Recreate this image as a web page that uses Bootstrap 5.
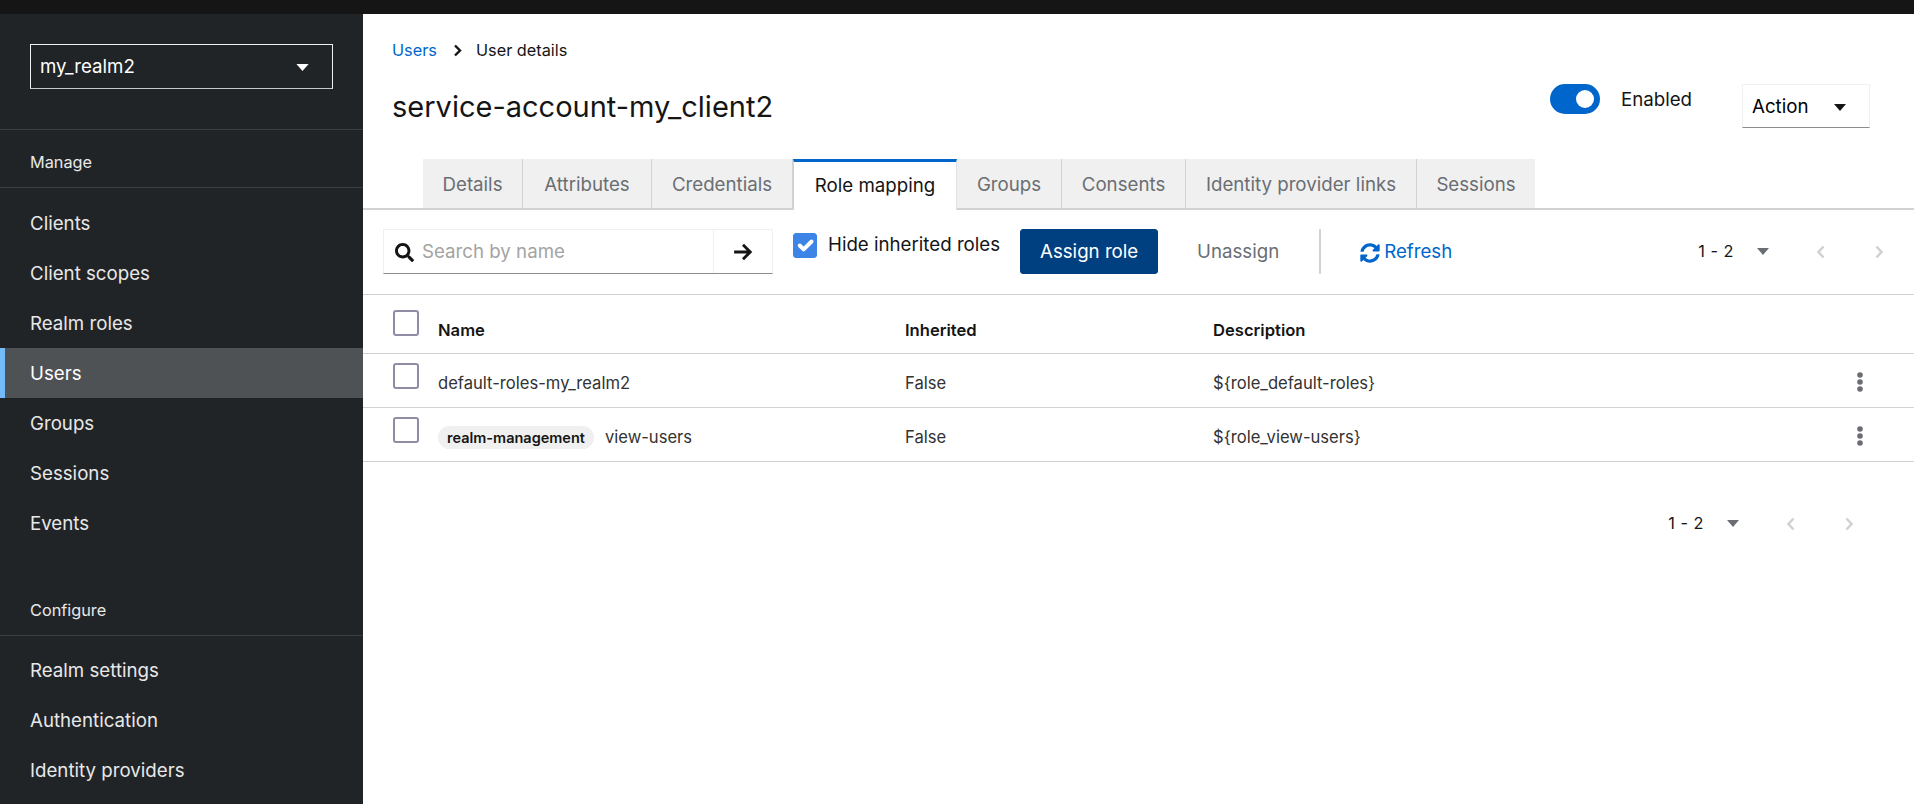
<!DOCTYPE html>
<html lang="en">
<head>
    <meta charset="UTF-8">
    <meta name="viewport" content="width=device-width, initial-scale=1">
    <title>User details</title>
    <link href="https://cdn.jsdelivr.net/npm/bootstrap@5.3.0/dist/css/bootstrap.min.css" rel="stylesheet">
    <script src="https://cdn.jsdelivr.net/npm/bootstrap@5.3.0/dist/js/bootstrap.bundle.min.js" defer></script>
    <style>
        html, body { height: 100%; overflow: hidden; }
        body { font-family: Inter, "Liberation Sans", sans-serif; font-size: 18.7px; color: #151515; }
        .top-strip { height: 14px; background: #151515; }
        .app-body { height: 790px; }

        .side { width: 363px; flex-shrink: 0; background: #212427; color: #e8e8e8; }
        .realm-wrap { padding: 30px 30px 40px; border-bottom: 1px solid #3c3f42; }
        .realm-select { height: 45px; padding: 2px 9px 0; border: 1px solid #f0f0f0; border-bottom-color: #c7c7c7; color: #fff; }
        .side-head { height: 58px; padding: 7px 30px 0; display: flex; align-items: center; font-size: 16.3px; border-bottom: 1px solid #3c3f42; }
        .side-list { padding-top: 10px; }
        .side-list + .side-gap + .side-head + .side-list { padding-top: 9px; }
        .side-list .nav-link { height: 50px; padding: 2px 30px 0; display: flex; align-items: center; color: #e8e8e8; }
        .side-list .nav-link.current { background: #4f5255; box-shadow: inset 5px 0 0 #73bcf7; color: #fff; }
        .side-gap { height: 30px; }
        .caret-gap { margin-right: 14px; }

        .crumbs { padding: 24px 25px 0 29px; }
        .crumbs .breadcrumb { --bs-breadcrumb-margin-bottom: 0; font-size: 16.3px; line-height: 24px; align-items: center; }
        .crumbs a { color: #06c; text-decoration: none; }
        .crumbs svg { margin: 0 14px 0 16px; }
        .head-row { height: 97px; padding: 22px 44px 0 29px; }
        .page-title { font-size: 29px; font-weight: 400; margin: 6px 0 0; color: #151515; }
        .switch-track { width: 50px; height: 30px; border-radius: 15px; background: #06c; position: relative; }
        .switch-track::after { content: ""; position: absolute; right: 6px; top: 6px; width: 18px; height: 18px; border-radius: 50%; background: #fff; }
        .switch-text { margin: 1px 50px 0 21px; line-height: 30px; }
        .action-btn { width: 128px; height: 44px; padding: 2px 9px 0; border: 1px solid #f0f0f0; border-bottom-color: #8a8d90; background: #fff; }

        .tab-row { padding-left: 60px; border-bottom: 2px solid #d2d2d2; height: 51px; flex-wrap: nowrap; --bs-nav-tabs-border-width: 0; }
        .tab-row .nav-link { height: 49px; padding: 0; width: 100%; text-align: center; line-height: 51px; border-radius: 0; border: 0; border-right: 1px solid #d2d2d2; background: #f0f0f0; color: #6a6e73; margin: 0; }
        .tab-row .nav-link.active { height: 51px; background: #fff; color: #151515; border-top: 3px solid #06c; border-left: 1px solid #d2d2d2; line-height: 48px; }
        .tab-a { width: 100px; } .tab-b { width: 129px; } .tab-c { width: 141px; } .tab-d { width: 164px; }
        .tab-e { width: 105px; } .tab-f { width: 124px; } .tab-g { width: 231px; } .tab-h { width: 118px; }
        .tab-h .nav-link { border-right: 0; }

        .tool-row { height: 85px; padding: 19px 0 0 20px; border-bottom: 1px solid #d2d2d2; }
        .search-box { width: 390px; height: 45px; border: 1px solid #f0f0f0; border-bottom-color: #8a8d90; }
        .search-input { flex: 1; min-width: 0; padding: 2px 11px 0; border-right: 1px solid #f0f0f0; color: #a3a3a3; }
        .search-go { width: 58px; }
        .hide-check { margin: 3px 0 0 20px; }
        .hide-check .form-check-input { width: 24px; height: 25px; margin: 0 11px 0 0; background-color: #3c85e6; border-color: #3c85e6; border-radius: 3px; background-size: 120%; }
        .hide-check label { margin-top: -1px; }
        .btn-assign { width: 138px; height: 45px; margin-left: 20px; padding: 2px 0 0; font-size: 18.7px; --bs-btn-bg: #004080; --bs-btn-border-color: #004080; --bs-btn-border-radius: 3px; }
        .btn-unassign { width: 118px; height: 45px; margin-left: 21px; padding: 2px 0 0; font-size: 18.7px; color: #6a6e73; border: 0; }
        .tool-sep { width: 2px; height: 45px; background: #d2d2d2; margin: 0 39px 0 22px; }
        .refresh { height: 45px; padding-top: 2px; color: #06c; text-decoration: none; }
        .pager { font-size: 16.3px; color: #151515; }
        .pager-count { letter-spacing: .5px; }
        .pager-top { margin-left: auto; padding: 0 30px 0 0; height: 45px; }
        .pager-bottom { height: 48px; padding-right: 60px; margin-top: 38px; }
        .pager .gap-a { margin: 0 0 0 23px; }
        .pager .gap-b { margin: 0 0 0 47px; }
        .pager .gap-c { margin: 0 0 0 50px; }

        .role-table { font-size: 16.6px; margin: 0; --bs-table-border-color: #d2d2d2; table-layout: fixed; width: 100%; }
        .role-table th, .role-table td { padding: 0; vertical-align: middle; color: #151515; }
        .role-table th { font-weight: 600; height: 58px; padding-top: 13px; }
        .role-table td { height: 54px; padding-top: 6px; color: #333; }
        .cell-check { width: 75px; padding-left: 30px !important; }
        .cell-name { width: 467px; padding-left: 0 !important; }
        .cell-inherit { width: 308px; }
        .cell-desc { width: auto; }
        .cell-kebab { width: 59px; }
        .box-check { display: block; width: 26px; height: 26px; margin: -14px 0 0 0; border: 2px solid #8f8da3; border-radius: 3px; }
        th .box-check { margin-top: -15px; }
        .client-pill { font-size: 14.5px; font-weight: 600; background: #f0f0f0; color: #151515; padding: 3px 9px; border-radius: 14px; margin-right: 11px; }
        .kebab { display: block; margin: -3px 0 0 2px; }
    </style>
</head>
<body>
    <div class="top-strip"></div>
    <div class="app-body d-flex">
        <aside class="side">
            <div class="realm-wrap">
                <div class="realm-select d-flex align-items-center justify-content-between">
                    <span>my_realm2</span>
                    <svg class="caret-gap" width="13" height="7" viewBox="0 0 14 8"><path d="M0 0h14L7 8z" fill="#fff"/></svg>
                </div>
            </div>
            <div class="side-head">Manage</div>
            <nav class="nav flex-column side-list">
                <a class="nav-link" href="#">Clients</a>
                <a class="nav-link" href="#">Client scopes</a>
                <a class="nav-link" href="#">Realm roles</a>
                <a class="nav-link current" href="#">Users</a>
                <a class="nav-link" href="#">Groups</a>
                <a class="nav-link" href="#">Sessions</a>
                <a class="nav-link" href="#">Events</a>
            </nav>
            <div class="side-gap"></div>
            <div class="side-head">Configure</div>
            <nav class="nav flex-column side-list">
                <a class="nav-link" href="#">Realm settings</a>
                <a class="nav-link" href="#">Authentication</a>
                <a class="nav-link" href="#">Identity providers</a>
            </nav>
        </aside>

        <main class="flex-grow-1">
            <div class="crumbs">
                <ol class="breadcrumb">
                    <li><a href="#">Users</a></li>
                    <li class="d-flex align-items-center">
                        <svg width="9" height="13" viewBox="0 0 9 13"><path d="M2 1.5l5 5-5 5" fill="none" stroke="#151515" stroke-width="2.4"/></svg>
                        User details
                    </li>
                </ol>
            </div>
            <div class="head-row d-flex align-items-start justify-content-between">
                <h1 class="page-title">service-account-my_client2</h1>
                <div class="d-flex align-items-start">
                    <span class="switch-track"></span>
                    <span class="switch-text">Enabled</span>
                    <button class="action-btn d-flex align-items-center justify-content-between" type="button">
                        <span>Action</span>
                        <svg class="caret-gap" width="12" height="7" viewBox="0 0 14 8"><path d="M0 0h14L7 8z" fill="#151515"/></svg>
                    </button>
                </div>
            </div>

            <ul class="nav nav-tabs tab-row">
                <li class="nav-item tab-a"><a class="nav-link" href="#">Details</a></li>
                <li class="nav-item tab-b"><a class="nav-link" href="#">Attributes</a></li>
                <li class="nav-item tab-c"><a class="nav-link" href="#">Credentials</a></li>
                <li class="nav-item tab-d"><a class="nav-link active" href="#">Role mapping</a></li>
                <li class="nav-item tab-e"><a class="nav-link" href="#">Groups</a></li>
                <li class="nav-item tab-f"><a class="nav-link" href="#">Consents</a></li>
                <li class="nav-item tab-g"><a class="nav-link" href="#">Identity provider links</a></li>
                <li class="nav-item tab-h"><a class="nav-link" href="#">Sessions</a></li>
            </ul>

            <div class="tool-row d-flex align-items-start">
                <div class="search-box d-flex align-items-stretch">
                    <div class="search-input d-flex align-items-center gap-2">
                        <svg width="19" height="19" viewBox="0 0 512 512"><path fill="#151515" d="M505 442.7L405.3 343c-4.5-4.5-10.6-7-17-7H372c27.6-35.3 44-79.7 44-128C416 93.1 322.9 0 208 0S0 93.1 0 208s93.1 208 208 208c48.3 0 92.7-16.4 128-44v16.3c0 6.4 2.5 12.5 7 17l99.7 99.7c9.4 9.4 24.6 9.4 33.9 0l28.3-28.3c9.4-9.4 9.4-24.6.1-34zM208 336c-70.7 0-128-57.2-128-128 0-70.7 57.2-128 128-128 70.7 0 128 57.2 128 128 0 70.7-57.2 128-128 128z"/></svg>
                        <span>Search by name</span>
                    </div>
                    <div class="search-go d-flex align-items-center justify-content-center">
                        <svg width="20" height="20" viewBox="0 0 18 18"><path d="M1 9h14M9 2.5L15.5 9 9 15.5" fill="none" stroke="#151515" stroke-width="2.6"/></svg>
                    </div>
                </div>
                <div class="hide-check form-check d-flex align-items-center p-0">
                    <input class="form-check-input" type="checkbox" id="hideRoles" checked>
                    <label for="hideRoles">Hide inherited roles</label>
                </div>
                <button class="btn btn-primary btn-assign" type="button">Assign role</button>
                <button class="btn btn-unassign" type="button">Unassign</button>
                <span class="tool-sep"></span>
                <a class="refresh d-flex align-items-center gap-1" href="#">
                    <svg width="20" height="20" viewBox="0 0 512 512"><path fill="#06c" d="M370.72 133.28C339.458 104.008 298.888 87.962 255.848 88c-77.458.068-144.328 53.178-162.791 126.85-1.344 5.363-6.122 9.15-11.651 9.15H24.103c-7.498 0-13.194-6.807-11.807-14.176C33.933 94.924 134.813 8 256 8c66.448 0 126.791 26.136 171.315 68.685L463.03 40.97C478.149 25.851 504 36.559 504 57.941V192c0 13.255-10.745 24-24 24H345.941c-21.382 0-32.09-25.851-16.971-40.971l41.75-41.749zM32 296h134.059c21.382 0 32.09 25.851 16.971 40.971l-41.75 41.75c31.262 29.273 71.835 45.319 114.876 45.28 77.418-.07 144.315-53.144 162.787-126.849 1.344-5.363 6.122-9.15 11.651-9.15h57.304c7.498 0 13.194 6.807 11.807 14.176C478.067 417.076 377.187 504 256 504c-66.448 0-126.791-26.136-171.315-68.685L48.97 471.03C33.851 486.149 8 475.441 8 454.059V320c0-13.255 10.745-24 24-24z"/></svg>
                    <span>Refresh</span>
                </a>
                <div class="pager pager-top d-flex align-items-center">
                    <span class="pager-count">1 - 2</span>
                    <svg class="gap-a" width="12" height="7" viewBox="0 0 12 7"><path d="M0 0h12L6 7z" fill="#6a6e73"/></svg>
                    <svg class="gap-b" width="9" height="14" viewBox="0 0 9 14"><path d="M7.5 1.5L2.5 7l5 5.5" fill="none" stroke="#d2d2d2" stroke-width="2.6"/></svg>
                    <svg class="gap-c" width="9" height="14" viewBox="0 0 9 14"><path d="M1.5 1.5l5 5.5-5 5.5" fill="none" stroke="#d2d2d2" stroke-width="2.6"/></svg>
                </div>
            </div>

            <table class="table role-table">
                <thead>
                    <tr>
                        <th class="cell-check"><span class="box-check"></span></th>
                        <th class="cell-name">Name</th>
                        <th class="cell-inherit">Inherited</th>
                        <th class="cell-desc">Description</th>
                        <th class="cell-kebab"></th>
                    </tr>
                </thead>
                <tbody>
                    <tr>
                        <td class="cell-check"><span class="box-check"></span></td>
                        <td class="cell-name">default-roles-my_realm2</td>
                        <td>False</td>
                        <td>${role_default-roles}</td>
                        <td><svg class="kebab" width="6" height="20" viewBox="0 0 6 20"><g fill="#6a6e73"><circle cx="3" cy="3" r="2.8"/><circle cx="3" cy="10" r="2.8"/><circle cx="3" cy="17" r="2.8"/></g></svg></td>
                    </tr>
                    <tr>
                        <td class="cell-check"><span class="box-check"></span></td>
                        <td class="cell-name"><span class="client-pill">realm-management</span>view-users</td>
                        <td>False</td>
                        <td>${role_view-users}</td>
                        <td><svg class="kebab" width="6" height="20" viewBox="0 0 6 20"><g fill="#6a6e73"><circle cx="3" cy="3" r="2.8"/><circle cx="3" cy="10" r="2.8"/><circle cx="3" cy="17" r="2.8"/></g></svg></td>
                    </tr>
                </tbody>
            </table>

            <div class="pager pager-bottom d-flex align-items-center justify-content-end">
                <span class="pager-count">1 - 2</span>
                <svg class="gap-a" width="12" height="7" viewBox="0 0 12 7"><path d="M0 0h12L6 7z" fill="#6a6e73"/></svg>
                <svg class="gap-b" width="9" height="14" viewBox="0 0 9 14"><path d="M7.5 1.5L2.5 7l5 5.5" fill="none" stroke="#d2d2d2" stroke-width="2.6"/></svg>
                <svg class="gap-c" width="9" height="14" viewBox="0 0 9 14"><path d="M1.5 1.5l5 5.5-5 5.5" fill="none" stroke="#d2d2d2" stroke-width="2.6"/></svg>
            </div>
        </main>
    </div>
</body>
</html>
